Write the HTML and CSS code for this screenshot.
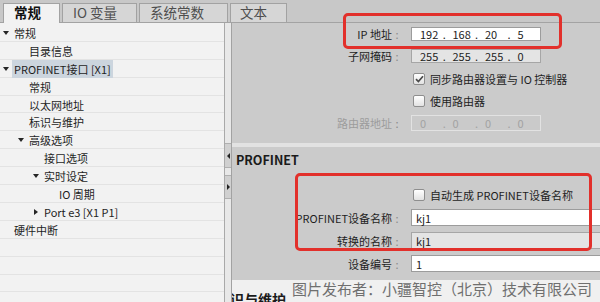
FILE: index.html
```html
<!DOCTYPE html>
<html lang="zh-CN">
<head>
<meta charset="utf-8">
<title>PROFINET 接口属性</title>
<link rel="stylesheet" href="styles.css">
</head>
<body>
<div class="app">
  <div class="tabs">
    <div class="tab active w1">常规</div>
    <div class="tab w2">IO 变量</div>
    <div class="tab w3">系统常数</div>
    <div class="tab w4">文本</div>
  </div>
  <div class="main">
    <div class="tree">
      <div class="row l0"><span class="tog open"></span><span class="txt">常规</span></div>
      <div class="row l1"><span class="tog"></span><span class="txt">目录信息</span></div>
      <div class="row l0"><span class="tog open"></span><span class="txt sel">PROFINET接口 [X1]</span></div>
      <div class="row l1"><span class="tog"></span><span class="txt">常规</span></div>
      <div class="row l1"><span class="tog"></span><span class="txt">以太网地址</span></div>
      <div class="row l1"><span class="tog"></span><span class="txt">标识与维护</span></div>
      <div class="row l1"><span class="tog open"></span><span class="txt">高级选项</span></div>
      <div class="row l2"><span class="tog"></span><span class="txt">接口选项</span></div>
      <div class="row l2"><span class="tog open"></span><span class="txt">实时设定</span></div>
      <div class="row l3"><span class="tog"></span><span class="txt">IO 周期</span></div>
      <div class="row l2"><span class="tog closed"></span><span class="txt">Port e3 [X1 P1]</span></div>
      <div class="row l0"><span class="tog"></span><span class="txt">硬件中断</span></div>
    </div>
    <div class="splitter">
      <div class="sbtn s1"><span class="arr left"></span></div>
      <div class="sbtn s2"><span class="arr right"></span></div>
    </div>
    <div class="pane">
      <section class="sec sec-ip">
        <div class="frow h14">
          <div class="lbl">IP 地址<span class="colon">:</span></div>
          <div class="field ipf"><span class="oct">192</span><span class="dot">.</span><span class="oct">168</span><span class="dot">.</span><span class="oct">20</span><span class="dot">.</span><span class="oct">5</span></div>
        </div>
        <div class="frow h14">
          <div class="lbl">子网掩码<span class="colon">:</span></div>
          <div class="field ipf ro"><span class="oct">255</span><span class="dot">.</span><span class="oct">255</span><span class="dot">.</span><span class="oct">255</span><span class="dot">.</span><span class="oct">0</span></div>
        </div>
        <div class="frow h14">
          <div></div>
          <div class="chk"><span class="box"><svg width="9" height="8" viewBox="0 0 9 8"><path d="M1 4.2 L3.4 6.6 L8 1.2" fill="none" stroke="#4a4a4a" stroke-width="1.7"/></svg></span><span>同步路由器设置与 IO 控制器</span></div>
        </div>
        <div class="frow h14">
          <div></div>
          <div class="chk"><span class="box"></span><span>使用路由器</span></div>
        </div>
        <div class="frow h16">
          <div class="lbl dis">路由器地址<span class="colon">:</span></div>
          <div class="field ipf off"><span class="oct">0</span><span class="dot">.</span><span class="oct">0</span><span class="dot">.</span><span class="oct">0</span><span class="dot">.</span><span class="oct">0</span></div>
        </div>
      </section>
      <section class="sec sec-pn">
        <h3 class="sec-title">PROFINET</h3>
        <div class="frow h14 first">
          <div></div>
          <div class="chk"><span class="box"></span><span>自动生成 PROFINET设备名称</span></div>
        </div>
        <div class="frow h17 g8">
          <div class="lbl">PROFINET设备名称<span class="colon">:</span></div>
          <div class="field tall">kj1</div>
        </div>
        <div class="frow h17 g6">
          <div class="lbl">转换的名称<span class="colon">:</span></div>
          <div class="field tall ro">kj1</div>
        </div>
        <div class="frow h17 g6">
          <div class="lbl">设备编号<span class="colon">:</span></div>
          <div class="field tall">1</div>
        </div>
      </section>
      <section class="sec sec-im">
        <h3 class="sec-title2">标识与维护</h3>
      </section>
    </div>
  </div>
  <div class="mark m1"></div>
  <div class="mark m2"></div>
  <div class="watermark">图片发布者：小疆智控（北京）技术有限公司</div>
</div>
</body>
</html>
```
FILE: styles.css
```css
* { box-sizing: border-box; margin: 0; padding: 0; }
html, body { width: 600px; height: 302px; overflow: hidden; }
body {
  font-family: "Noto Sans CJK SC", "Noto Sans", sans-serif;
  font-size: 11px;
  color: #1e1e1e;
  background: #cbcbcb;
}
.app { position: relative; width: 600px; height: 302px; display: flex; flex-direction: column; }

/* tabs */
.tabs {
  height: 23px; flex: none; display: flex; align-items: flex-end; gap: 2px;
  padding-left: 3px; border-bottom: 1px solid #a3a3a3; background: #c8c8c8;
}
.tab {
  height: 19px; border: 1px solid #a2a2a2; border-bottom: none; background: #d6d6d6;
  font-size: 13.5px; line-height: 17px; padding-left: 10px; color: #4e4e4e; white-space: nowrap;
}
.tab.active { height: 20px; margin-bottom: -1px; background: #f2f2f2; font-weight: bold; color: #111; }
.w1 { width: 57px; }
.w2 { width: 75px; }
.w3 { width: 89px; }
.w4 { width: 57px; padding-left: 9px; }

/* main */
.main { flex: 1; display: flex; min-height: 0; }

/* tree */
.tree {
  width: 224px; flex: none; padding-top: 1px;
  background-color: #f2f2f2;
  background-image: repeating-linear-gradient(to bottom, transparent 0, transparent 16.9px, #e3e3e3 16.9px, #e3e3e3 17.9px);
  background-position: 0 1px;
}
.row { height: 17.9px; display: flex; align-items: center; white-space: nowrap; }
.l1 { padding-left: 15px; }
.l2 { padding-left: 30px; }
.l3 { padding-left: 45px; }
.tog { width: 14px; flex: none; height: 100%; display: flex; align-items: center; }
.tog.open::before {
  content: ""; margin-left: 3px;
  border-left: 3.5px solid transparent; border-right: 3.5px solid transparent; border-top: 4px solid #262626;
}
.tog.closed::before {
  content: ""; margin-left: 4px;
  border-top: 3.5px solid transparent; border-bottom: 3.5px solid transparent; border-left: 4px solid #262626;
}
.txt.sel { background: #ccd5de; padding: 0 2px; margin-left: -2px; line-height: 18px; }

/* splitter */
.splitter {
  width: 8px; flex: none; background: #e8e8e8;
  border-left: 1px solid #a9a9a9; border-right: 1px solid #a2a2a2;
  display: flex; flex-direction: column; padding-top: 120px; gap: 7px;
}
.sbtn {
  background: #d0d0d0; border-top: 1px solid #b0b0b0; border-bottom: 1px solid #b0b0b0;
  display: flex; align-items: center; justify-content: center;
}
.s1 { height: 25px; }
.s2 { height: 24px; }
.arr.left { border-top: 3px solid transparent; border-bottom: 3px solid transparent; border-right: 3px solid #222; }
.arr.right { border-top: 3px solid transparent; border-bottom: 3px solid transparent; border-left: 3px solid #222; }

/* property pane */
.pane { flex: 1; min-width: 0; overflow: hidden; display: flex; flex-direction: column; background: #cbcbcb; }
.sec-ip { padding: 4px 0 12px; border-bottom: 4px solid #e2e2e2; display: flex; flex-direction: column; gap: 8px; }
.frow { display: grid; grid-template-columns: 173px 1fr; column-gap: 6px; align-items: center; }
.h14 { height: 14px; }
.h16 { height: 16px; }
.h17 { height: 17px; }
.lbl { text-align: right; white-space: nowrap; line-height: 14px; color: #1e1e1e; }
.lbl.dis { color: #9c9c9c; }
.colon { display: inline-block; width: 10px; text-align: center; color: #8a8a8a; margin-right: 3px; }

.field {
  height: 100%; border: 1px solid #9c9c9c; background: #fff;
  display: flex; align-items: center; padding-left: 8px; white-space: nowrap; line-height: 12px; color: #222;
}
.ipf { width: 130px; }
.ro { background: #e4e4e4; border-color: #a6a6a6; }
.off { background: #cacaca; border-color: #e2e2e2; color: #a2a2a2; }
.oct { display: inline-block; width: 23px; }
.dot { display: inline-block; width: 10px; }
.tall { width: 200px; padding-left: 4px; }

.chk { display: flex; align-items: center; gap: 5px; margin-left: 2px; white-space: nowrap; }
.box {
  width: 12px; height: 12px; border: 1px solid #8e8e8e; border-radius: 2px;
  background: linear-gradient(#ffffff, #e2e2e2);
  display: flex; align-items: center; justify-content: center; flex: none;
}

.sec-pn { padding: 4px 0 8px; display: flex; flex-direction: column; }
.sec-title { font-size: 12.5px; font-weight: bold; line-height: 18px; padding-left: 4px; color: #1a1a1a; }
.first { margin-top: 18px; }
.g8 { margin-top: 8px; }
.g6 { margin-top: 6px; }

.sec-im { flex: 1; background: #f0f0f0; padding-top: 10px; }
.sec-title2 { font-size: 14px; font-weight: bold; line-height: 18px; margin-left: -16px; white-space: nowrap; color: #1a1a1a; }

/* annotations */
.mark { position: absolute; border: 3px solid #e2302b; border-radius: 5px; }
.m1 { left: 343px; top: 13px; width: 219px; height: 36px; }
.m2 { left: 295px; top: 173px; width: 297px; height: 78px; }
.watermark {
  position: absolute; left: 292px; top: 280px;
  font-size: 15px; line-height: 18px; color: #6f6f6f; white-space: nowrap;
}
```
